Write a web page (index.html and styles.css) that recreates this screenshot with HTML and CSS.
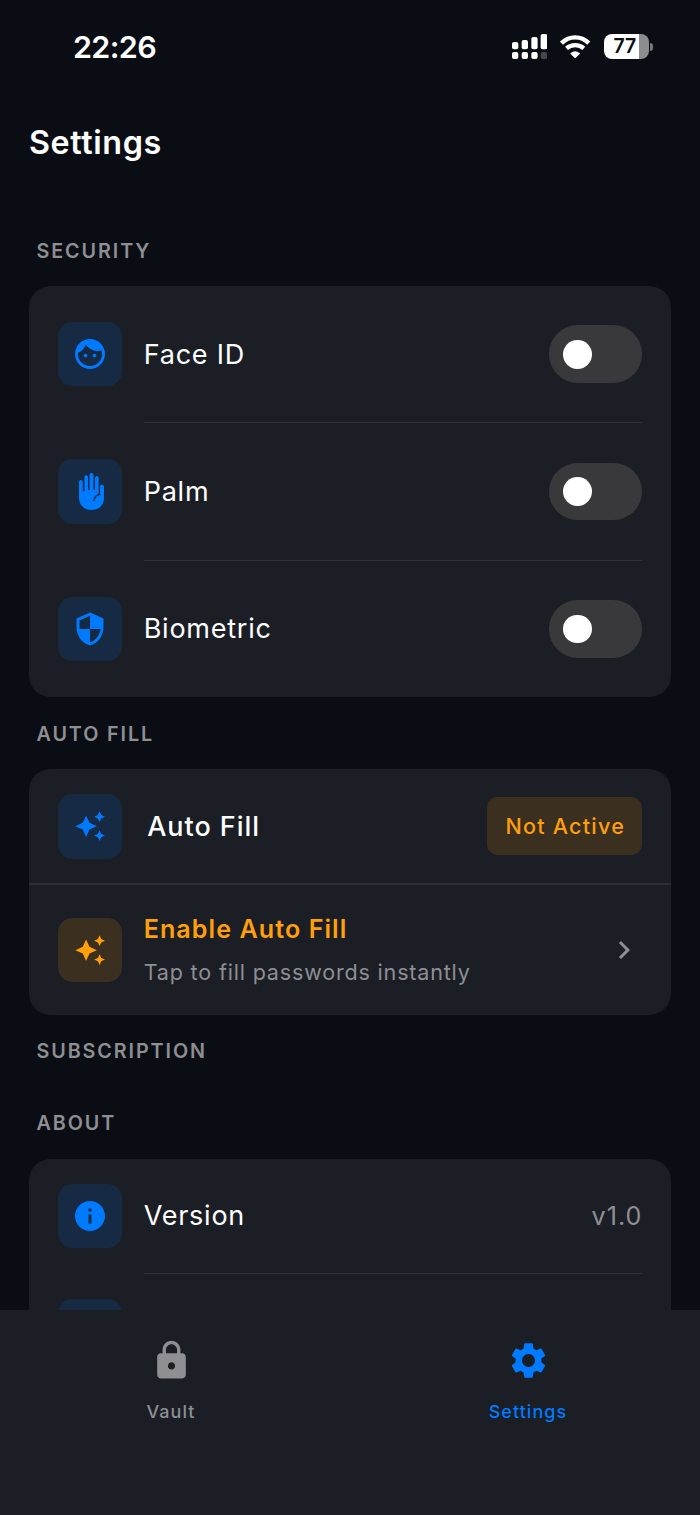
FILE: index.html
```html
<!DOCTYPE html>
<html lang="en">
<head>
<meta charset="utf-8">
<title>Settings</title>
<link rel="stylesheet" href="styles.css">
</head>
<body>
<svg width="0" height="0" class="defs">
  <symbol id="sparkles" viewBox="0 0 24 24"><path d="M19 9l1.25-2.75L23 5l-2.75-1.25L19 1l-1.25 2.75L15 5l2.75 1.25L19 9zm-7.5.5L9 4 6.5 9.5 1 12l5.5 2.5L9 20l2.5-5.5L17 12l-5.5-2.5zM19 15l-1.25 2.75L15 19l2.75 1.25L19 23l1.25-2.75L23 19l-2.75-1.25L19 15z"/></symbol>
</svg>
<div class="screen">
  <header class="status">
    <span class="time">22:26</span>
    <div class="indicators">
      <svg class="signal" viewBox="65 42 106 75">
        <rect x="65" y="66" width="19" height="22" rx="6"/><rect x="94" y="60" width="19" height="28" rx="6"/><rect x="123" y="51" width="19" height="37" rx="6"/><rect x="151" y="42" width="20" height="46" rx="6"/>
        <rect x="65" y="96" width="19" height="21" rx="6"/><rect x="94" y="96" width="19" height="21" rx="6"/><rect x="123" y="96" width="19" height="21" rx="6"/><rect x="151" y="96" width="20" height="21" rx="6" class="dim"/>
      </svg>
      <svg class="wifi" viewBox="210 44 91 70">
        <path class="arc" d="M214.500 68.500Q232 51 255.500 51T296.500 68.500"/>
        <path class="arc" d="M229.500 84Q240.500 74.500 255.500 74.500T281.500 84"/>
        <path d="M242 98Q255.500 87 269 98Q270.500 100 268.500 102L257.500 112.500Q255.500 114 253.500 112.500L242.500 102Q240.500 100 242 98Z"/>
      </svg>
      <div class="battery"><div class="cell"><span>77</span></div><i class="nub"></i></div>
    </div>
  </header>
  <h1 class="title">Settings</h1>
  <main class="content">
    <h2 class="label">SECURITY</h2>
    <section class="card">
      <div class="row tall">
        <div class="tile"><svg class="ic" viewBox="0 0 24 24"><path d="M9 11.75c-.69 0-1.250.56-1.250 1.250s.56 1.250 1.250 1.250 1.250-.56 1.250-1.250-.56-1.250-1.250-1.250zm6 0c-.69 0-1.250.56-1.250 1.250s.56 1.250 1.250 1.250 1.250-.56 1.250-1.250-.56-1.250-1.250-1.250zM12 2C6.480 2 2 6.480 2 12s4.480 10 10 10 10-4.480 10-10S17.520 2 12 2zm0 18c-4.410 0-8-3.590-8-8 0-.29.02-.58.05-.86 2.360-1.050 4.230-2.980 5.210-5.370C11.070 8.330 14.050 10 17.420 10c.78 0 1.530-.09 2.250-.26.21.71.33 1.470.33 2.260 0 4.410-3.590 8-8 8z"/></svg></div>
        <span class="name">Face ID</span>
        <div class="toggle"><i></i></div>
      </div>
      <hr class="inset">
      <div class="row tall">
        <div class="tile"><svg class="hand" viewBox="85.500 69 75 111"><path d="M85.500 95.500a5.700 5.700 0 0 1 11.400 0V123.500h4.800V81.500a5.400 5.400 0 0 1 10.800 0V120h4.500V75a6 6 0 0 1 12 0V120h4.500V83.500a5.500 5.500 0 0 1 11 0V134h4V110.500a6 6 0 0 1 12 0V144C160.500 166 144 180 123 180S85.500 166 85.500 144Z"/><path class="crease" d="M147.500 133.500C138 135 132 140 130.500 151"/></svg></div>
        <span class="name">Palm</span>
        <div class="toggle"><i></i></div>
      </div>
      <hr class="inset">
      <div class="row tall">
        <div class="tile"><svg class="ic" viewBox="0 0 24 24"><path d="M12 1L3 5v6c0 5.550 3.840 10.740 9 12 5.160-1.260 9-6.450 9-12V5l-9-4zm0 10.990h7c-.53 4.120-3.280 7.790-7 8.940V12H5V6.300l7-3.110v8.800z"/></svg></div>
        <span class="name">Biometric</span>
        <div class="toggle"><i></i></div>
      </div>
    </section>

    <h2 class="label">AUTO FILL</h2>
    <section class="card">
      <div class="row">
        <div class="tile"><svg class="spark"><use href="#sparkles"/></svg></div>
        <span class="name strong">Auto Fill</span>
        <span class="badge">Not Active</span>
      </div>
      <hr class="full">
      <div class="row action">
        <div class="tile amber"><svg class="spark"><use href="#sparkles"/></svg></div>
        <div class="text">
          <span class="enable">Enable Auto Fill</span>
          <span class="hint">Tap to fill passwords instantly</span>
        </div>
        <svg class="chevron" viewBox="0 0 24 24"><path d="M10 6L8.590 7.410 13.170 12l-4.580 4.590L10 18l6-6z"/></svg>
      </div>
    </section>

    <h2 class="label">SUBSCRIPTION</h2>
    <h2 class="label">ABOUT</h2>
    <section class="card">
      <div class="row">
        <div class="tile"><svg class="ic" viewBox="0 0 24 24"><path d="M12 2C6.480 2 2 6.480 2 12s4.480 10 10 10 10-4.480 10-10S17.520 2 12 2zm1 15h-2v-6h2v6zm0-8h-2V7h2v2z"/></svg></div>
        <span class="name">Version</span>
        <span class="value">v1.0</span>
      </div>
      <hr class="inset">
      <div class="row"><div class="tile"></div></div>
    </section>
  </main>
  <nav class="tabs">
    <div class="tab">
      <svg viewBox="0 0 24 24"><path d="M18 8h-1V6c0-2.760-2.240-5-5-5S7 3.240 7 6v2H6c-1.100 0-2 .9-2 2v10c0 1.100.9 2 2 2h12c1.100 0 2-.9 2-2V10c0-1.100-.9-2-2-2zm-6 9c-1.100 0-2-.9-2-2s.9-2 2-2 2 .9 2 2-.9 2-2 2zm3.100-9H8.900V6c0-1.710 1.390-3.100 3.100-3.100 1.710 0 3.100 1.390 3.100 3.100v2z"/></svg>
      <span>Vault</span>
    </div>
    <div class="tab active">
      <svg viewBox="0 0 24 24"><path d="M19.140 12.940c.04-.3.06-.61.06-.94 0-.32-.02-.64-.07-.94l2.030-1.580c.18-.14.23-.41.12-.61l-1.920-3.320c-.12-.22-.37-.29-.59-.22l-2.390.96c-.5-.38-1.030-.7-1.620-.94l-.36-2.540c-.04-.24-.24-.41-.48-.41h-3.840c-.24 0-.43.17-.47.41l-.36 2.540c-.59.24-1.130.57-1.620.94l-2.390-.96c-.22-.08-.47 0-.59.22L2.740 8.870c-.12.21-.08.47.12.61l2.030 1.580c-.05.3-.09.63-.09.94s.02.64.07.94l-2.030 1.580c-.18.14-.23.41-.12.61l1.920 3.320c.12.22.37.29.59.22l2.390-.96c.5.38 1.030.7 1.620.94l.36 2.540c.05.24.24.41.48.41h3.840c.24 0 .44-.17.47-.41l.36-2.540c.59-.24 1.130-.56 1.620-.94l2.390.96c.22.08.47 0 .59-.22l1.920-3.320c.12-.22.07-.47-.12-.61l-2.010-1.580zM12 15.600c-1.980 0-3.600-1.620-3.600-3.600s1.620-3.600 3.600-3.600 3.600 1.620 3.600 3.600-1.620 3.600-3.600 3.600z"/></svg>
      <span>Settings</span>
    </div>
  </nav>
</div>
</body>
</html>
```
FILE: styles.css
```css
* { box-sizing: border-box; }
body { margin: 0; background: #0a0d14; color: #fff; font-family: Inter, "Liberation Sans", sans-serif; }
svg { display: block; fill: currentColor; flex: none; }
.defs { position: absolute; }
.screen { width: 700px; height: 1515px; display: flex; flex-direction: column; overflow: hidden; }

.status { flex: none; height: 93px; padding: 0 47px 0 73px; display: flex; align-items: center; justify-content: space-between; }
.time { font-size: 30.500px; font-weight: 600; line-height: 36px; letter-spacing: -0.650px; }
.indicators { display: flex; align-items: center; gap: 13px; height: 25px; }
.signal { width: 35.300px; height: 25px; }
.dim { fill: #45474d; }
.wifi { width: 30.300px; height: 23.300px; }
.arc { fill: none; stroke: #fff; stroke-width: 13; }
.battery { display: flex; align-items: center; gap: 1px; }
.cell { width: 45.500px; height: 25px; border-radius: 8px; background: linear-gradient(90deg, #fff 34.700px, #8c8d91 34.700px); color: #0a0d14; font-size: 19.500px; font-weight: 600; line-height: 25px; padding-left: 10px; }
.nub { width: 3px; height: 8px; border-radius: 0 4px 4px 0; background: #77787c; }

.title { flex: none; margin: 0; height: 121.200px; padding: 30px 0 0 29px; font-size: 32.300px; line-height: 40px; font-weight: 600; letter-spacing: 0.600px; }

.content { flex: none; height: 1095.800px; padding: 0 29px; overflow: hidden; }
.label { margin: 0; height: 71.800px; padding: 1.500px 0 0 7.500px; font-size: 19.750px; font-weight: 600; line-height: 71.800px; letter-spacing: 1.900px; color: #8e8e93; }
.card { background: #1b1e25; border-radius: 21.500px; overflow: hidden; }
.row { display: flex; align-items: center; height: 114.500px; padding: 0 28.600px; }
.row.tall { height: 136.400px; }
.row.action { height: 130px; }
.tile { flex: none; width: 64.600px; height: 64.600px; margin-right: 21.500px; border-radius: 14.400px; background: #162b43; color: #007aff; display: flex; align-items: center; justify-content: center; }
.tile.amber { background: #3b2f20; color: #ff9f0a; }
.ic { width: 36px; height: 36px; }
.spark { width: 32.300px; height: 32.300px; }
.hand { width: 25px; height: 37px; margin-left: 3px; }
.crease { fill: none; stroke: #162b43; stroke-width: 4; stroke-linecap: round; }
.name { flex: 1; padding-top: 1px; font-size: 27px; line-height: 36px; letter-spacing: 0.750px; white-space: nowrap; }
.strong { font-weight: 500; padding-left: 3.600px; letter-spacing: 0.950px; }
.toggle { width: 93.500px; height: 57.500px; border-radius: 28.750px; background: #39393b; display: flex; align-items: center; padding-left: 14.200px; }
.toggle i { width: 28.800px; height: 28.800px; border-radius: 50%; background: #fff; }
hr { border: 0; margin: 0; }
.inset { height: 1px; margin: 0 28.600px 0 115px; background: #333335; }
.full { height: 1.500px; background: #2d3037; }
.badge { width: 155px; height: 57.500px; border-radius: 10.800px; background: #3b2f20; color: #ff9f0a; font-size: 21.540px; font-weight: 500; line-height: 58.500px; padding-left: 18px; letter-spacing: 1.250px; white-space: nowrap; }
.text { flex: 1; padding-top: 2px; display: flex; flex-direction: column; gap: 8px; white-space: nowrap; }
.enable { font-size: 25.130px; font-weight: 600; line-height: 34px; letter-spacing: 1.050px; color: #ff9f0a; }
.hint { font-size: 21.540px; line-height: 36px; letter-spacing: 0.820px; color: #8e8e93; }
.chevron { width: 36px; height: 36px; color: #8e8e93; }
.value { padding-top: 1px; font-size: 25.130px; line-height: 36px; letter-spacing: 1px; color: #8e8e93; }

.tabs { flex: 1; display: flex; background: #1b1e25; padding: 29px 0 0; }
.tab { flex: none; width: 342px; display: flex; flex-direction: column; align-items: center; color: #8e8e93; }
.tab.active { width: 372px; color: #007aff; }
.tab svg { width: 43px; height: 43px; }
.tab span { margin-top: 18px; font-size: 17.950px; line-height: 24px; font-weight: 500; letter-spacing: 1.100px; }
```
